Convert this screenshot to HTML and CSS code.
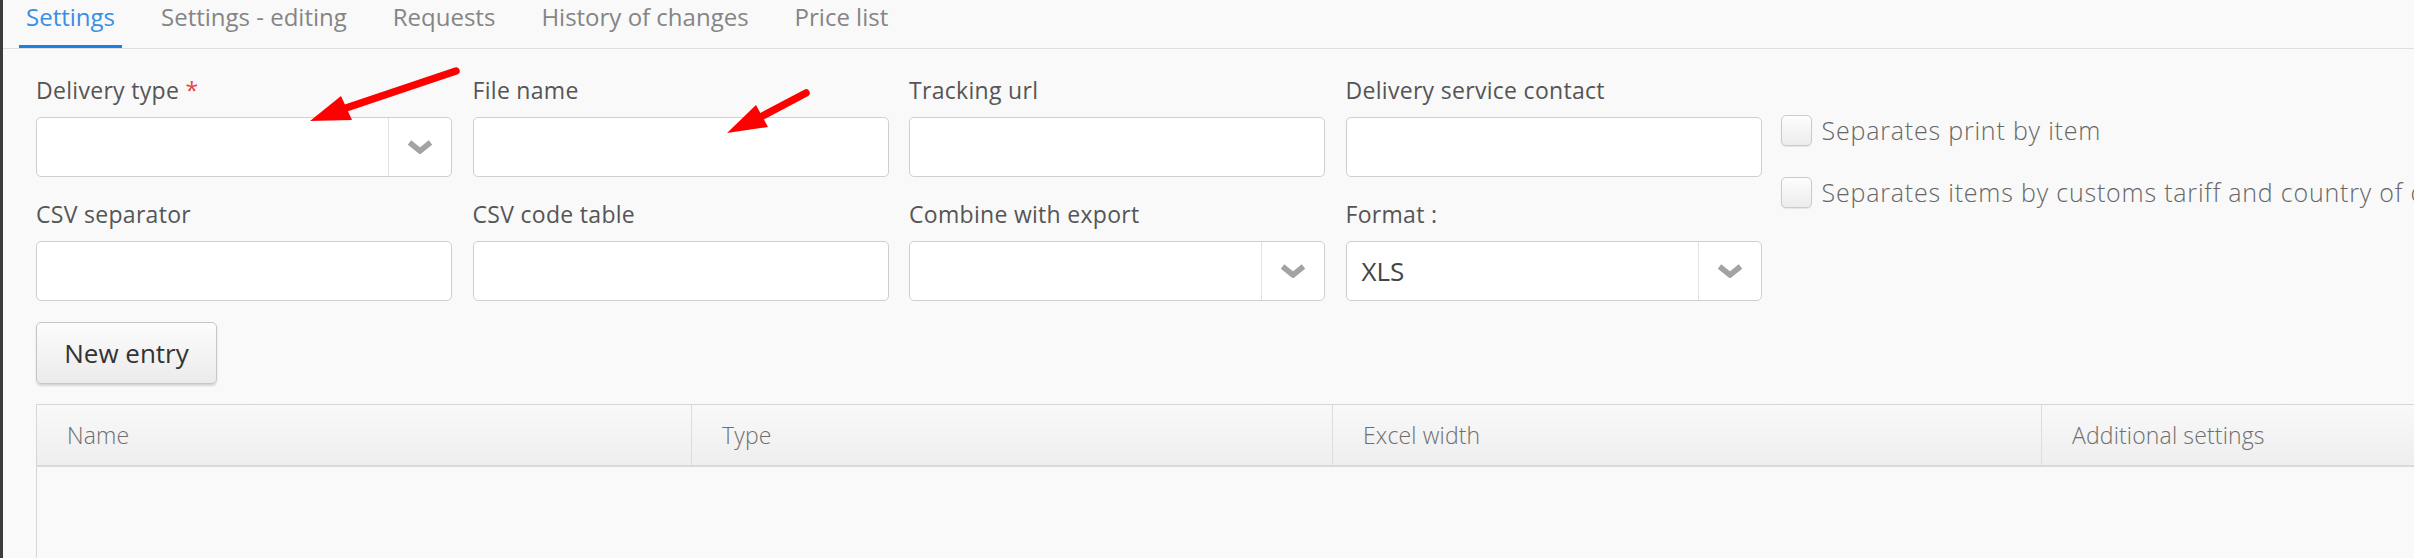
FILE: index.html
```html
<!DOCTYPE html>
<html>
<head>
<meta charset="utf-8">
<link rel="stylesheet" href="styles.css">
</head>
<body>
<div class="page">
  <nav class="tabs">
    <a class="tab active">Settings</a>
    <a class="tab">Settings - editing</a>
    <a class="tab">Requests</a>
    <a class="tab">History of changes</a>
    <a class="tab">Price list</a>
  </nav>

  <div class="content">
    <div class="form">
      <div class="grid">
        <div class="field">
          <label class="label">Delivery type <span class="req">*</span></label>
          <div class="select"><span class="value"></span><span class="caret"><svg viewBox="0 0 26 14" width="26" height="14"><polyline points="2.5,2.5 13,11 23.5,2.5" /></svg></span></div>
        </div>
        <div class="field">
          <label class="label">File name</label>
          <div class="input"></div>
        </div>
        <div class="field">
          <label class="label">Tracking url</label>
          <div class="input"></div>
        </div>
        <div class="field">
          <label class="label">Delivery service contact</label>
          <div class="input"></div>
        </div>
        <div class="field">
          <label class="label">CSV separator</label>
          <div class="input"></div>
        </div>
        <div class="field">
          <label class="label">CSV code table</label>
          <div class="input"></div>
        </div>
        <div class="field">
          <label class="label">Combine with export</label>
          <div class="select"><span class="value"></span><span class="caret"><svg viewBox="0 0 26 14" width="26" height="14"><polyline points="2.5,2.5 13,11 23.5,2.5" /></svg></span></div>
        </div>
        <div class="field">
          <label class="label">Format :</label>
          <div class="select"><span class="value">XLS</span><span class="caret"><svg viewBox="0 0 26 14" width="26" height="14"><polyline points="2.5,2.5 13,11 23.5,2.5" /></svg></span></div>
        </div>
      </div>
      <div class="checks">
        <label class="check"><span class="box"></span><span class="check-text">Separates print by item</span></label>
        <label class="check"><span class="box"></span><span class="check-text">Separates items by customs tariff and country of origin</span></label>
      </div>
    </div>

    <button class="btn">New entry</button>

    <div class="table">
      <div class="thead">
        <div class="th c1">Name</div>
        <div class="th c2">Type</div>
        <div class="th c3">Excel width</div>
        <div class="th c4">Additional settings</div>
      </div>
      <div class="tbody"></div>
    </div>
  </div>

  <svg class="annot" width="2414" height="558" viewBox="0 0 2414 558">
    <line x1="456" y1="71" x2="340" y2="110" />
    <polygon points="310,121 341,96 352,120" />
    <line x1="806" y1="93" x2="757" y2="119" />
    <polygon points="727,133 756,105 768,127" />
  </svg>
</div>
</body>
</html>
```

FILE: styles.css
```css
html, body {
  margin: 0;
  padding: 0;
  background: #f9f9f9;
  overflow: hidden;
}
body {
  width: 2414px;
  height: 558px;
  font-family: "Open Sans", "Liberation Sans", sans-serif;
  color: #555;
}
.page {
  position: relative;
  height: 558px;
  border-left: 3px solid #3c3c3c;
  box-sizing: border-box;
  overflow: hidden;
}

/* tabs */
.tabs {
  display: flex;
  padding-left: 16px;
  height: 48px;
  border-bottom: 1px solid #dedede;
}
.tab {
  box-sizing: border-box;
  height: 48px;
  padding: 0 7px;
  margin-right: 32px;
  font-size: 24px;
  line-height: 33px;
  color: #858585;
  border-bottom: 3px solid transparent;
  white-space: nowrap;
}
.tab.active {
  color: #3a8ee3;
  border-bottom-color: #1f7fe0;
}

/* form */
.content {
  padding-left: 33px;
}
.form {
  display: flex;
  padding-top: 26px;
}
.grid {
  display: grid;
  grid-template-columns: repeat(4, 416px);
  column-gap: 20.5px;
  row-gap: 22px;
}
.field {
  display: flex;
  flex-direction: column;
}
.label {
  font-size: 23px;
  letter-spacing: 0.3px;
  line-height: 30px;
  height: 30px;
  margin-bottom: 12px;
  color: #555;
  white-space: nowrap;
}
.req {
  color: #e9403c;
}
.input, .select {
  box-sizing: border-box;
  height: 60px;
  background: #fff;
  border: 1px solid #cfcfcf;
  border-radius: 5px;
}
.select {
  display: flex;
  align-items: stretch;
}
.select .value {
  flex: 1;
  display: flex;
  align-items: center;
  padding-left: 15px;
  font-size: 26px;
  color: #444;
}
.select .caret {
  width: 62px;
  border-left: 1px solid #e2e2e2;
  display: flex;
  align-items: center;
  justify-content: center;
}
.caret svg polyline {
  fill: none;
  stroke: #a3a3a3;
  stroke-width: 5.5;
  stroke-linejoin: miter;
  stroke-linecap: butt;
}

.checks {
  display: flex;
  flex-direction: column;
  gap: 31px;
  padding-top: 40px;
  margin-left: 19px;
}
.check {
  display: flex;
  align-items: center;
  height: 31px;
  white-space: nowrap;
}
.box {
  box-sizing: border-box;
  width: 31px;
  height: 31px;
  border: 1px solid #cacaca;
  border-radius: 5px;
  background: linear-gradient(#fdfdfd, #ececec);
  box-shadow: 0 1px 1px rgba(0,0,0,0.08);
  flex: none;
}
.check-text {
  margin-left: 10px;
  font-size: 25px;
  font-weight: 300;
  letter-spacing: 0.8px;
  line-height: 31px;
  color: #666;
}

/* button */
.btn {
  display: block;
  box-sizing: border-box;
  margin-top: 21px;
  height: 62px;
  width: 181px;
  padding: 0;
  font-family: "Open Sans", "Liberation Sans", sans-serif;
  font-size: 26px;
  color: #333;
  background: linear-gradient(#fcfcfc, #ebebeb);
  border: 1px solid #c6c6c6;
  border-radius: 5px;
  box-shadow: 0 2px 2px rgba(0,0,0,0.14);
}

/* table */
.table {
  margin-top: 20px;
  width: 2600px;
  border-left: 1px solid #d6d6d6;
}
.thead {
  display: flex;
  height: 63px;
  box-sizing: border-box;
  border-top: 1px solid #d6d6d6;
  border-bottom: 2px solid #dadada;
  background: linear-gradient(#f9f9f9, #eeeeee);
}
.th {
  box-sizing: border-box;
  display: flex;
  align-items: center;
  padding-left: 30px;
  font-size: 23px;
  letter-spacing: 0.15px;
  font-weight: 300;
  color: #6e6e6e;
  border-right: 1px solid #dddddd;
}
.c1 { width: 655px; }
.c2 { width: 641px; }
.c3 { width: 709px; }
.c4 { width: 595px; border-right: none; }
.tbody {
  height: 200px;
}

/* annotation arrows */
.annot {
  position: absolute;
  left: -3px;
  top: 0;
  pointer-events: none;
}
.annot line {
  stroke: #ff0000;
  stroke-width: 7.5;
  stroke-linecap: round;
}
.annot polygon {
  fill: #ff0000;
}
```
